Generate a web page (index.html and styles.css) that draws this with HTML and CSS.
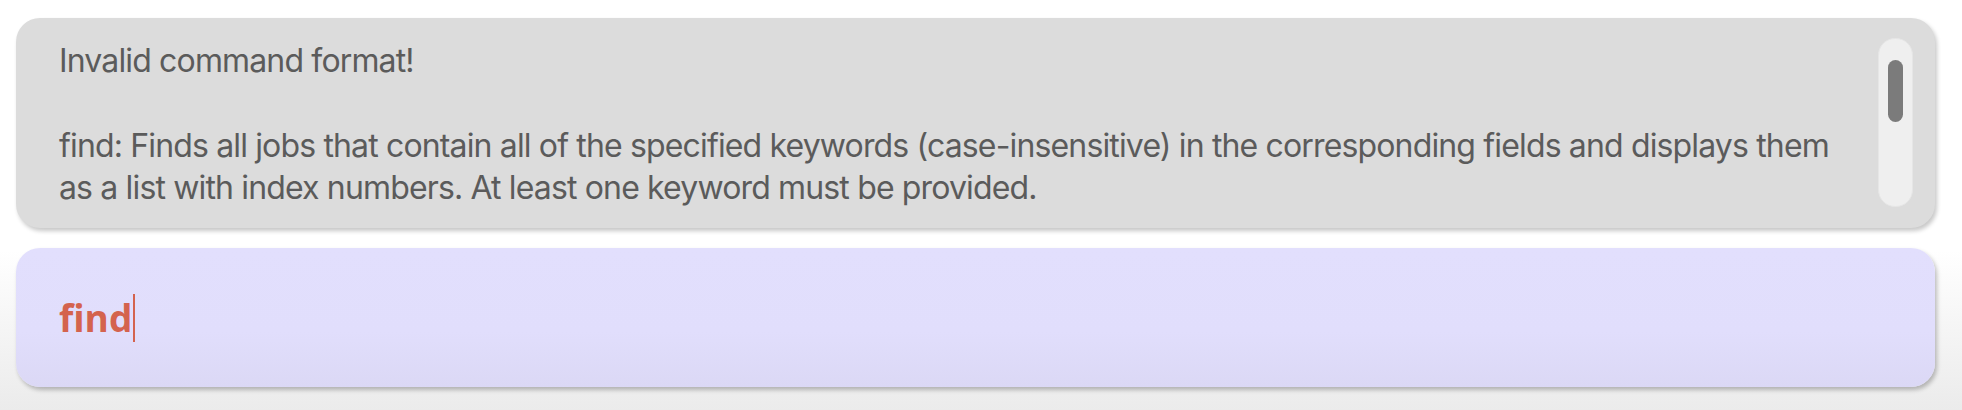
FILE: index.html
```html
<!DOCTYPE html>
<html>
<head lang="en">
<meta charset="UTF-8">
<title>Command Box</title>
<link rel="stylesheet" href="styles.css">
</head>
<body>
<div class="window">
  <div class="result-box">
    <div class="result-text">
      <p class="line">Invalid command format!</p>
      <p class="line blank">&nbsp;</p>
      <p class="line">find: Finds all jobs that contain all of the specified keywords (case-insensitive) in the corresponding fields and displays them</p>
      <p class="line">as a list with index numbers. At least one keyword must be provided.</p>
    </div>
    <div class="scroll-track">
      <div class="scroll-thumb"></div>
    </div>
  </div>
  <div class="command-box">
    <span class="command-text">find</span><span class="caret"></span>
  </div>
</div>
</body>
</html>
```

FILE: styles.css
```css
html, body {
  margin: 0;
  padding: 0;
  height: 410px;
}

body {
  background: linear-gradient(to bottom, #ffffff 0px, #ffffff 250px, #ebebeb 410px);
  overflow: hidden;
}

.window {
  padding: 18px 27px 0 16px;
}

.result-box {
  display: flex;
  height: 210px;
  background-color: #dcdcdc;
  border-radius: 24px;
  box-shadow: 2px 3px 4px rgba(0, 0, 0, 0.22);
}

.result-text {
  flex: 1;
  height: 189px;
  overflow: hidden;
  padding: 0 0 0 43px;
  font-family: "Inter", "Liberation Sans", sans-serif;
  font-size: 32px;
  letter-spacing: -0.85px;
  color: #5b5b5b;
}

.line {
  margin: 0;
  height: 42px;
  line-height: 42px;
  white-space: nowrap;
}

.line:first-child {
  margin-top: 22px;
}

.blank {
  height: 43px;
}

.scroll-track {
  width: 33px;
  margin: 20px 22px 21px 0;
  background-color: #efefef;
  border: 1px solid #e6e6e6;
  border-radius: 17px;
  display: flex;
  justify-content: center;
  padding-top: 21px;
}

.scroll-thumb {
  width: 15px;
  height: 62px;
  background-color: #7b7b7b;
  border-radius: 8px;
}

.command-box {
  margin-top: 20px;
  height: 139px;
  background: linear-gradient(to bottom, #e2dffd 0%, #e1defc 60%, #dbd8f5 100%);
  border-radius: 24px;
  box-shadow: 2px 3px 4px rgba(0, 0, 0, 0.25);
  display: flex;
  align-items: center;
  padding-left: 43px;
}

.command-text {
  font-family: "Open Sans", "DejaVu Sans", sans-serif;
  font-weight: 700;
  font-size: 37px;
  color: #d4634e;
}

.caret {
  width: 2px;
  height: 48px;
  margin-left: 1px;
  background-color: #d4634e;
}
```
